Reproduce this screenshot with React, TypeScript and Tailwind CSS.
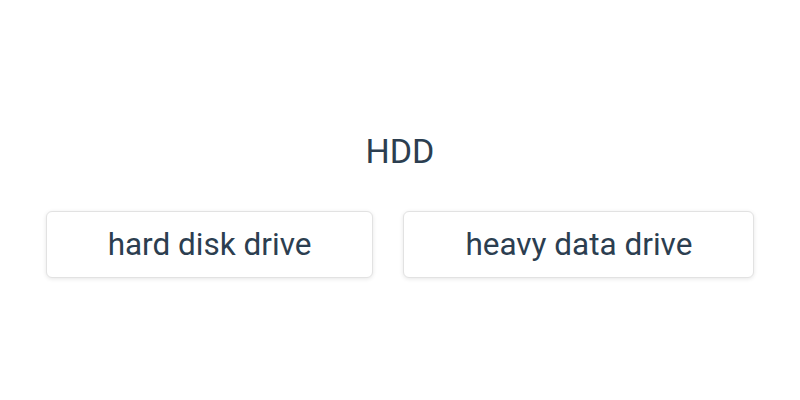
// Quiz card: acronym with two answer options
const options = ['hard disk drive', 'heavy data drive']

const App = () => {
  return (
    <div
      className="h-[400px] w-[800px] flex flex-col items-center pt-[131px] bg-white text-[#2c3e50]"
      style={{ fontFamily: 'Roboto, "Noto Sans", sans-serif' }}
    >
      <h1 className="text-[34px] leading-[40px] font-normal">HDD</h1>
      <div className="flex gap-[30px] mt-[40px]">
        {options.map(opt => (
          <button
            key={opt}
            type="button"
            className="px-[61px] h-[67px] text-[31.5px] leading-none bg-white border border-[#e2e2e2] rounded-[6px] shadow-[0_1px_4px_rgba(0,0,0,0.1)] text-[#2c3e50]"
          >
            {opt}
          </button>
        ))}
      </div>
    </div>
  )
}

export default App
